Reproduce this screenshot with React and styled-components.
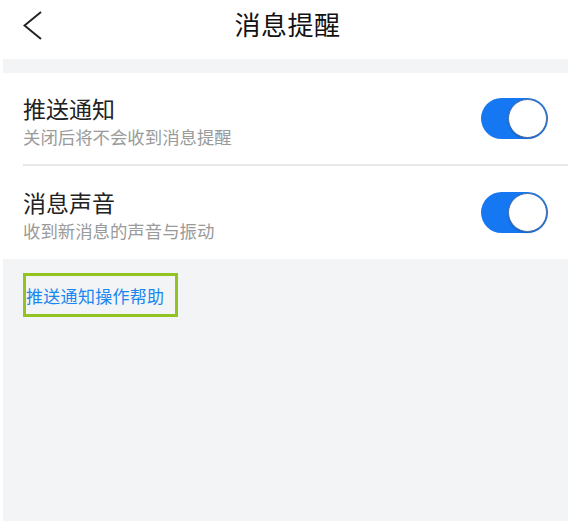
import React from "react";
import styled, { createGlobalStyle } from "styled-components";

const GlobalStyle = createGlobalStyle`
  html, body {
    margin: 0;
    padding: 0;
    height: 100%;
    background: #fff;
  }
  #root {
    height: 100%;
  }
  body {
    font-family: "Noto Sans CJK SC", "Noto Sans", sans-serif;
    color: #222;
  }
`;

const Screen = styled.div`
  display: flex;
  flex-direction: column;
  height: 100%;
  margin: 0 5px 0 3px;
`;

const Header = styled.header`
  position: relative;
  height: 59px;
  display: flex;
  align-items: center;
  justify-content: center;
  background: #fff;
`;

const BackButton = styled.button`
  position: absolute;
  left: 20px;
  top: 9px;
  width: 20px;
  height: 32px;
  padding: 0;
  border: 0;
  background: none;
  display: flex;
  align-items: center;
  justify-content: center;
`;

const Title = styled.h1`
  margin: -12px 0 0 4px;
  font-size: 26px;
  font-weight: 400;
  color: #111;
  letter-spacing: 0.5px;
`;

const Gap = styled.div`
  height: 14px;
  background: #f3f4f6;
`;

const List = styled.div`
  background: #fff;
`;

const Row = styled.div`
  height: 93px;
  display: flex;
  align-items: center;
  justify-content: space-between;
  margin-left: 20px;
  padding-right: 20px;
  border-bottom: ${(p) => (p.$last ? "none" : "2px solid #e8e8ea")};
  box-sizing: border-box;
`;

const Texts = styled.div`
  display: flex;
  flex-direction: column;
  padding-top: 5px;
`;

const RowTitle = styled.div`
  font-size: 23px;
  line-height: 30px;
  color: #222;
`;

const RowSub = styled.div`
  font-size: 17.4px;
  line-height: 27px;
  color: #9a9a9a;
`;

const Toggle = styled.button`
  width: 67px;
  height: 41px;
  padding: 0;
  border: 0;
  border-radius: 21px;
  background: ${(p) => (p.$on ? "#1677f2" : "#ddd")};
  display: flex;
  align-items: center;
  justify-content: ${(p) => (p.$on ? "flex-end" : "flex-start")};
`;

const Knob = styled.span`
  width: 39px;
  height: 39px;
  border-radius: 50%;
  background: #fff;
  border: 1px solid #4a6fa8;
  box-sizing: border-box;
  box-shadow: 0 1px 2px rgba(0, 0, 0, 0.2);
  margin-right: 1px;
`;

const Body = styled.main`
  flex: 1;
  background: #f3f4f6;
  padding: 14px 0 0 20px;
`;

const HelpLink = styled.a`
  display: inline-flex;
  align-items: center;
  height: 44px;
  box-sizing: border-box;
  padding: 0 11px 0 0;
  border: 3px solid #92c320;
  font-size: 17px;
  color: #1a86f0;
  text-decoration: none;
  letter-spacing: 0.3px;
`;

function SettingRow({ title, sub, last }) {
  return (
    <Row $last={last}>
      <Texts>
        <RowTitle>{title}</RowTitle>
        <RowSub>{sub}</RowSub>
      </Texts>
      <Toggle $on>
        <Knob />
      </Toggle>
    </Row>
  );
}

export default function App() {
  return (
    <>
      <GlobalStyle />
      <Screen>
        <Header>
          <BackButton aria-label="back">
            <svg width="20" height="29" viewBox="0 0 20 29">
              <path d="M18 1 L1.5 14.5 L18 28" fill="none" stroke="#222" strokeWidth="2" />
            </svg>
          </BackButton>
          <Title>消息提醒</Title>
        </Header>
        <Gap />
        <List>
          <SettingRow title="推送通知" sub="关闭后将不会收到消息提醒" />
          <SettingRow title="消息声音" sub="收到新消息的声音与振动" last />
        </List>
        <Body>
          <HelpLink href="#">推送通知操作帮助</HelpLink>
        </Body>
      </Screen>
    </>
  );
}
